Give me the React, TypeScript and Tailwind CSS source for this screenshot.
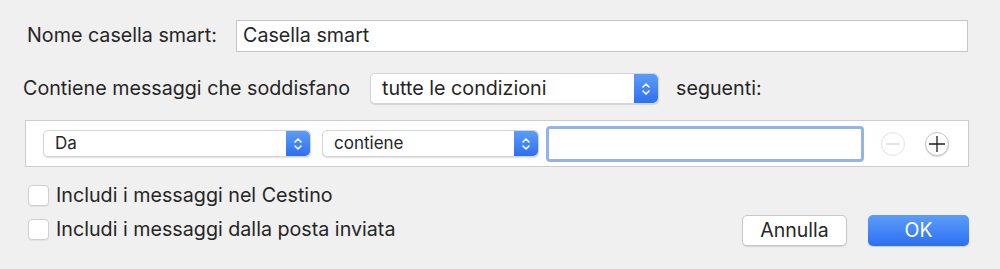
import { useState } from "react";

const font = { fontFamily: '"Inter", "Liberation Sans", sans-serif' };

function Stepper() {
    return (
        <span className="flex w-[24px] shrink-0 items-center justify-center self-stretch rounded-r-[5px] bg-gradient-to-b from-[#5c9cf8] to-[#2f6ff0]">
            <svg width="10" height="16" viewBox="0 0 10 16" fill="none" stroke="white" strokeWidth="1.6" strokeLinecap="round" strokeLinejoin="round">
                <path d="M2 6 L5 3 L8 6" />
                <path d="M2 10 L5 13 L8 10" />
            </svg>
        </span>
    );
}

function Popup({ label, className }: { label: string; className: string }) {
    return (
        <div className={`flex items-stretch rounded-[5px] border border-[#d4d4d4] bg-white shadow-[0_1px_1px_rgba(0,0,0,0.12)] ${className}`}>
            <span className="flex flex-1 items-center pl-[11px] text-[#262626]">{label}</span>
            <Stepper />
        </div>
    );
}

function Checkbox({ label }: { label: string }) {
    const [checked, setChecked] = useState(false);
    return (
        <label className="flex h-[21px] items-center">
            <button
                onClick={() => setChecked(!checked)}
                className="ml-[3px] h-[21px] w-[21px] rounded-[4px] border border-[#cfcfcf] bg-white shadow-[0_1px_1px_rgba(0,0,0,0.06)]"
            />
            <span className="ml-[7px] text-[#262626]">{label}</span>
        </label>
    );
}

export default function App() {
    return (
        <div style={font} className="h-[269px] w-[1000px] overflow-hidden bg-[#f0f0f0] text-[19.7px] leading-none text-[#262626]">
            <div className="flex flex-col px-[25px] pt-[20px]">
                <div className="flex items-center">
                    <span className="ml-[2px]">Nome casella smart:</span>
                    <div className="ml-auto mr-[7px] flex h-[32px] w-[732px] items-center border border-[#c6c6c6] bg-white pl-[6px]">
                        Casella smart
                    </div>
                </div>

                <div className="mt-[21px] flex items-center">
                    <span className="ml-[-2px]">Contiene messaggi che soddisfano</span>
                    <Popup label="tutte le condizioni" className="ml-[20px] h-[31px] w-[289px]" />
                    <span className="ml-[17px]">seguenti:</span>
                </div>

                <div className="mt-[16px] flex h-[47px] w-[944px] items-center border border-[#cccccc] bg-white pl-[17px]">
                    <Popup label="Da" className="h-[27px] w-[268px] text-[17px]" />
                    <Popup label="contiene" className="ml-[11px] h-[27px] w-[217px] text-[17px]" />
                    <div className="ml-[7px] h-[36px] w-[318px] rounded-[4px] border-[3px] border-[#93b3ea] bg-white" />
                    <button className="ml-[17px] flex h-[24px] w-[24px] items-center justify-center rounded-full border border-[#e2e2e2] bg-white">
                        <svg width="14" height="2" viewBox="0 0 14 2"><path d="M0 1 H14" stroke="#d6d6d6" strokeWidth="1.2" /></svg>
                    </button>
                    <button className="ml-[20px] flex h-[24px] w-[24px] items-center justify-center rounded-full border border-[#c4c4c4] bg-white shadow-[0_1px_1px_rgba(0,0,0,0.15)]">
                        <svg width="16" height="16" viewBox="0 0 16 16"><path d="M0 8 H16 M8 0 V16" stroke="#1e1e1e" strokeWidth="1.3" /></svg>
                    </button>
                </div>

                <div className="mt-[18px] flex items-end justify-between">
                    <div className="flex flex-col gap-[13px]">
                        <Checkbox label="Includi i messaggi nel Cestino" />
                        <Checkbox label="Includi i messaggi dalla posta inviata" />
                    </div>
                    <div className="mb-[-6px] mr-[6px] flex items-center">
                        <button className="h-[31px] w-[105px] rounded-[5px] border border-[#c8c8c8] bg-white text-[19.5px] text-[#262626] shadow-[0_1px_1px_rgba(0,0,0,0.12)]">
                            Annulla
                        </button>
                        <button className="ml-[21px] h-[31px] w-[101px] rounded-[5px] bg-gradient-to-b from-[#5d9df8] to-[#2d6ef1] text-[19.5px] text-white shadow-[0_1px_1px_rgba(0,0,0,0.15)]">
                            OK
                        </button>
                    </div>
                </div>
            </div>
        </div>
    );
}
